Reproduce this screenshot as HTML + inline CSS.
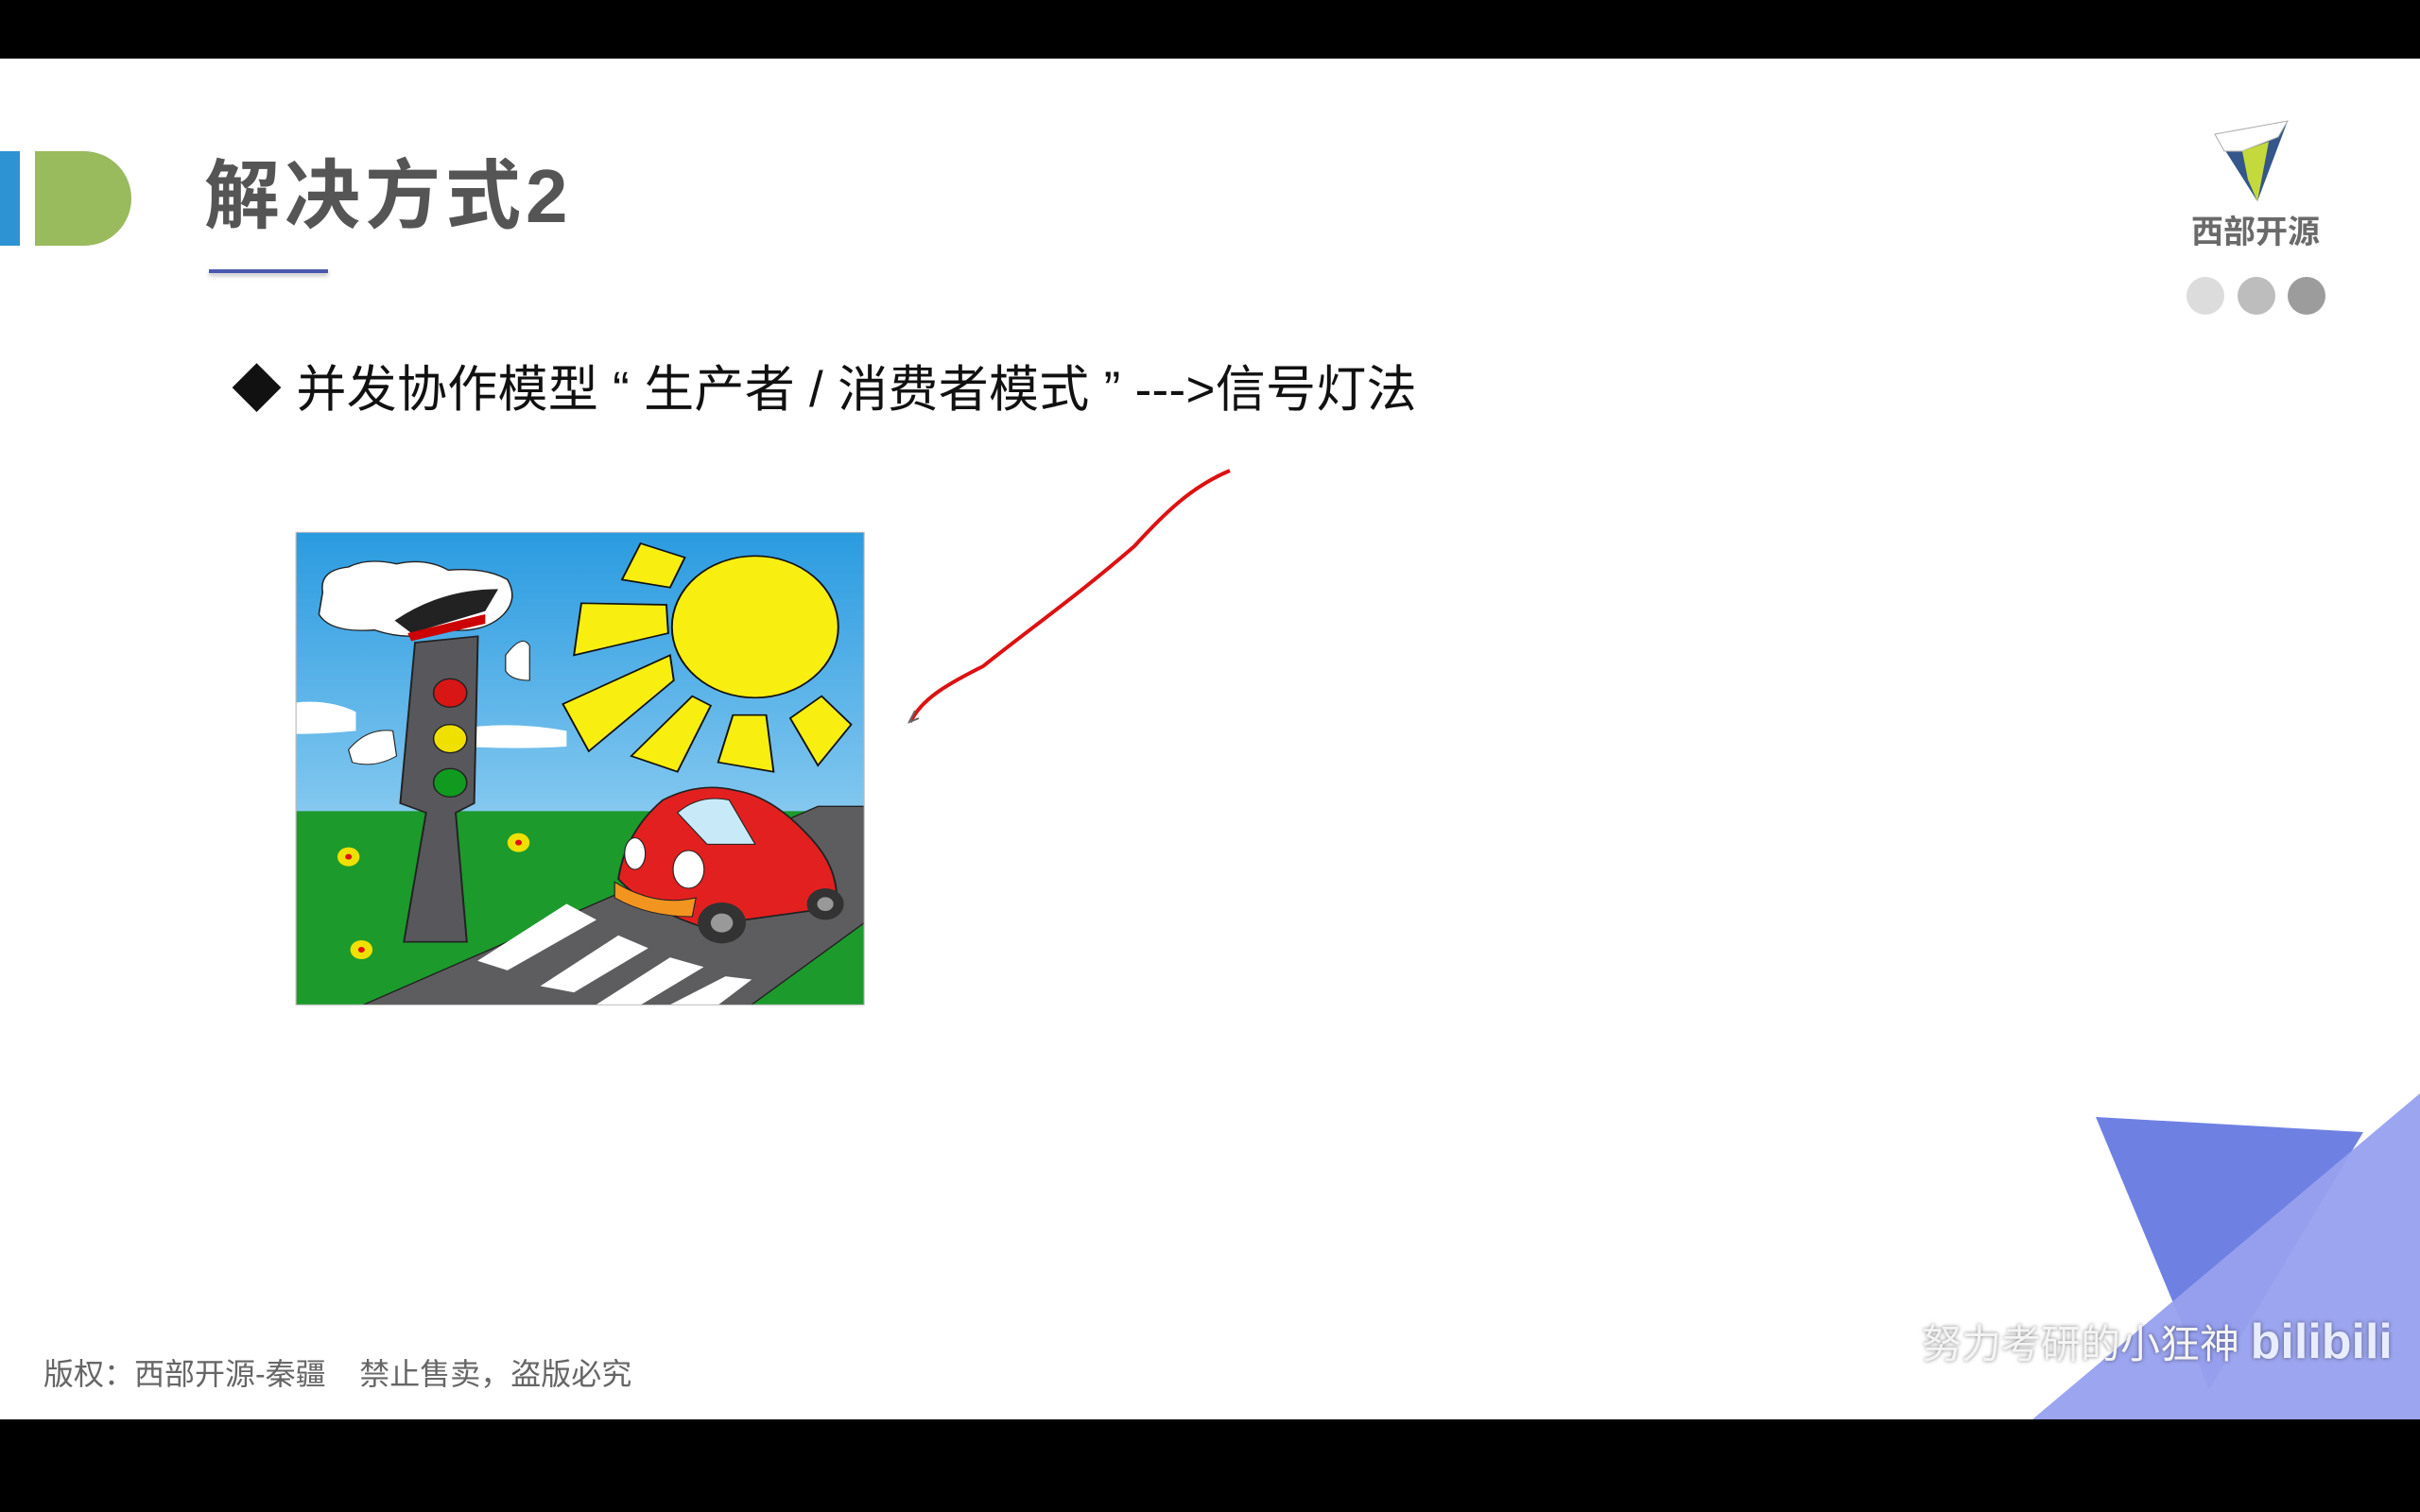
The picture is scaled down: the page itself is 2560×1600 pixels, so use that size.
<!DOCTYPE html>
<html><head><meta charset="utf-8"><style>
html,body{margin:0;padding:0}
body{width:2560px;height:1600px;background:#fff;position:relative;overflow:hidden;font-family:"Liberation Sans","Noto Sans CJK SC",sans-serif}
.abs{position:absolute}
</style></head><body>
<div class="abs" style="left:0;top:0;width:2560px;height:62px;background:#000"></div>
<div class="abs" style="left:0;top:1502px;width:2560px;height:98px;background:#000"></div>
<div class="abs" style="left:0;top:160px;width:21px;height:100px;background:#2d93d2"></div>
<div class="abs" style="left:37px;top:160px;width:102px;height:100px;background:#9aba5e;border-radius:0 50px 50px 0"></div>
<div class="abs" style="left:216px;top:158px;font-size:80px;font-weight:bold;color:#555;line-height:100px;letter-spacing:5px">解决方式2</div>
<div class="abs" style="left:221px;top:285px;width:126px;height:4px;background:#4a58b0;box-shadow:0 3px 4px rgba(0,0,0,0.25)"></div>
<div class="abs" style="left:245px;top:380px;font-size:53px;color:#111;line-height:66px;white-space:nowrap;letter-spacing:0.3px">◆ 并发协作模型 “ 生产者 / 消费者模式 ” ---&gt;信号灯法</div>

<svg class="abs" style="left:310px;top:560px;overflow:hidden" width="610" height="510" viewBox="0 0 1560 1530" preserveAspectRatio="none">
<defs><linearGradient id="sky" x1="0" y1="0" x2="0" y2="1"><stop offset="0" stop-color="#2a9be0"/><stop offset="0.55" stop-color="#7cc4ee"/><stop offset="1" stop-color="#eef7fc"/></linearGradient>
<clipPath id="c"><rect x="8" y="10" width="1537" height="1500"/></clipPath></defs>
<g clip-path="url(#c)">
<rect x="8" y="10" width="1537" height="1500" fill="url(#sky)"/>
<rect x="8" y="895" width="1537" height="615" fill="#1c9a2c"/>
<polygon points="190,1510 1240,1510 1545,1250 1545,880 1420,880" fill="#5d5d60" stroke="#222" stroke-width="4"/>
<path d="M80,200 Q70,130 150,120 Q200,90 280,110 Q360,90 420,130 Q520,120 580,160 Q610,220 570,270 Q520,330 420,320 Q320,360 220,320 Q100,330 70,270 Z" fill="#fff" stroke="#222" stroke-width="4"/>
<path d="M8,550 Q100,540 170,580 L170,640 Q80,650 8,650 Z" fill="#fff"/>
<path d="M470,630 Q600,610 740,640 L740,690 Q600,700 470,690 Z" fill="#fff"/>
<circle cx="1250" cy="310" r="225" fill="#f8ee10" stroke="#111" stroke-width="5"/>
<polygon points="890,160 940,45 1060,90 1020,185" fill="#f8ee10" stroke="#111" stroke-width="5"/>
<polygon points="760,400 780,235 1010,240 1015,330" fill="#f8ee10" stroke="#111" stroke-width="5"/>
<polygon points="730,555 1020,400 1030,480 800,705" fill="#f8ee10" stroke="#111" stroke-width="5"/>
<polygon points="915,720 1080,530 1130,560 1040,770" fill="#f8ee10" stroke="#111" stroke-width="5"/>
<polygon points="1150,740 1190,590 1280,590 1300,770" fill="#f8ee10" stroke="#111" stroke-width="5"/>
<polygon points="1345,600 1430,530 1510,620 1420,750" fill="#f8ee10" stroke="#111" stroke-width="5"/>
<path d="M330,360 L500,340 L490,870 L440,900 L470,1310 L300,1310 L360,900 L290,870 Z" fill="#58585c" stroke="#222" stroke-width="5"/>
<path d="M275,290 Q400,190 555,190 L520,260 L320,330 Z" fill="#222"/>
<path d="M310,330 L520,270 L520,300 L320,355 Z" fill="#c00"/>
<circle cx="425" cy="520" r="45" fill="#d81616" stroke="#222" stroke-width="4"/>
<circle cx="425" cy="665" r="45" fill="#f0e000" stroke="#222" stroke-width="4"/>
<circle cx="425" cy="805" r="45" fill="#119a20" stroke="#222" stroke-width="4"/>
<path d="M150,700 Q200,630 270,640 L280,720 Q220,760 160,740 Z" fill="#fff" stroke="#222" stroke-width="3"/>
<path d="M575,400 Q620,330 640,370 L640,480 Q590,480 575,450 Z" fill="#fff" stroke="#222" stroke-width="3"/>
<g fill="#fff" stroke="#fff">
<polygon points="500,1370 740,1190 820,1240 580,1400"/>
<polygon points="670,1450 880,1290 960,1330 760,1470"/>
<polygon points="820,1510 1020,1360 1110,1390 940,1510"/>
<polygon points="1020,1510 1170,1420 1240,1430 1150,1510"/>
</g>
<path d="M880,1110 Q900,960 1000,860 Q1100,800 1200,830 Q1300,850 1400,980 Q1480,1080 1470,1200 L1100,1260 Q950,1200 880,1110 Z" fill="#e32020" stroke="#222" stroke-width="5"/>
<path d="M1040,900 Q1100,840 1180,860 L1250,1000 L1120,1000 Z" fill="#c8eaf8" stroke="#222" stroke-width="3"/>
<path d="M870,1120 Q980,1200 1090,1170 L1080,1230 Q960,1230 870,1170 Z" fill="#f29420" stroke="#222" stroke-width="3"/>
<circle cx="1160" cy="1250" r="65" fill="#333"/><circle cx="1160" cy="1250" r="30" fill="#999"/>
<circle cx="1440" cy="1190" r="50" fill="#333"/><circle cx="1440" cy="1190" r="22" fill="#999"/>
<ellipse cx="1070" cy="1080" rx="42" ry="60" fill="#fff" stroke="#222" stroke-width="3"/>
<ellipse cx="925" cy="1030" rx="28" ry="50" fill="#fff" stroke="#222" stroke-width="3"/>
<g fill="#f0e000"><circle cx="150" cy="1040" r="30"/><circle cx="610" cy="995" r="30"/><circle cx="185" cy="1335" r="30"/></g>
<g fill="#e01010"><circle cx="150" cy="1040" r="9"/><circle cx="610" cy="995" r="9"/><circle cx="185" cy="1335" r="9"/></g>
</g>
<rect x="8" y="10" width="1537" height="1500" fill="none" stroke="#bbb" stroke-width="3"/>
</svg>

<svg class="abs" style="left:0;top:0" width="2560" height="1600">
<path d="M1301,498 C1260,515 1230,545 1200,578 C1140,630 1090,665 1040,705 C1000,725 975,740 963,764" fill="none" stroke="#dd1111" stroke-width="4"/>
<path d="M968,752 l-6,12 l10,-4" fill="none" stroke="#666" stroke-width="2"/>
<polygon points="2343,142 2420,128 2388,213" fill="#34568a"/>
<polygon points="2343,142 2420,128 2410,145 2372,160 2353,160" fill="#fff" stroke="#aaa" stroke-width="1"/>
<polygon points="2372,160 2400,150 2388,213 2378,190" fill="#c4d93c"/>
<polygon points="2217,1182 2500,1198 2337,1470" fill="#6f80e3"/>
<polygon points="2560,1157 2560,1502 2150,1502" fill="#97a0ee" fill-opacity="0.95"/>
<circle cx="2333" cy="313" r="20" fill="#dcdcdc"/>
<circle cx="2387" cy="313" r="20" fill="#bdbdbd"/>
<circle cx="2440" cy="313" r="20" fill="#9c9c9c"/>
</svg>
<div class="abs" style="left:2318px;top:226px;font-size:34px;font-weight:bold;color:#6a6a6a;line-height:40px;letter-spacing:0px">西部开源</div>
<div class="abs" style="left:46px;top:1433px;font-size:32px;color:#666;line-height:42px;white-space:nowrap">版权：西部开源-秦疆&nbsp;&nbsp;&nbsp;&nbsp;禁止售卖，盗版必究</div>
<div class="abs" style="left:2033px;top:1392px;font-size:42px;color:#f4f4f4;line-height:56px;white-space:nowrap;text-shadow:0 0 4px rgba(0,0,0,0.5)">努力考研的小狂神 <span style="font-weight:bold;font-size:52px;color:#e8ecff">bilibili</span></div>
</body></html>
